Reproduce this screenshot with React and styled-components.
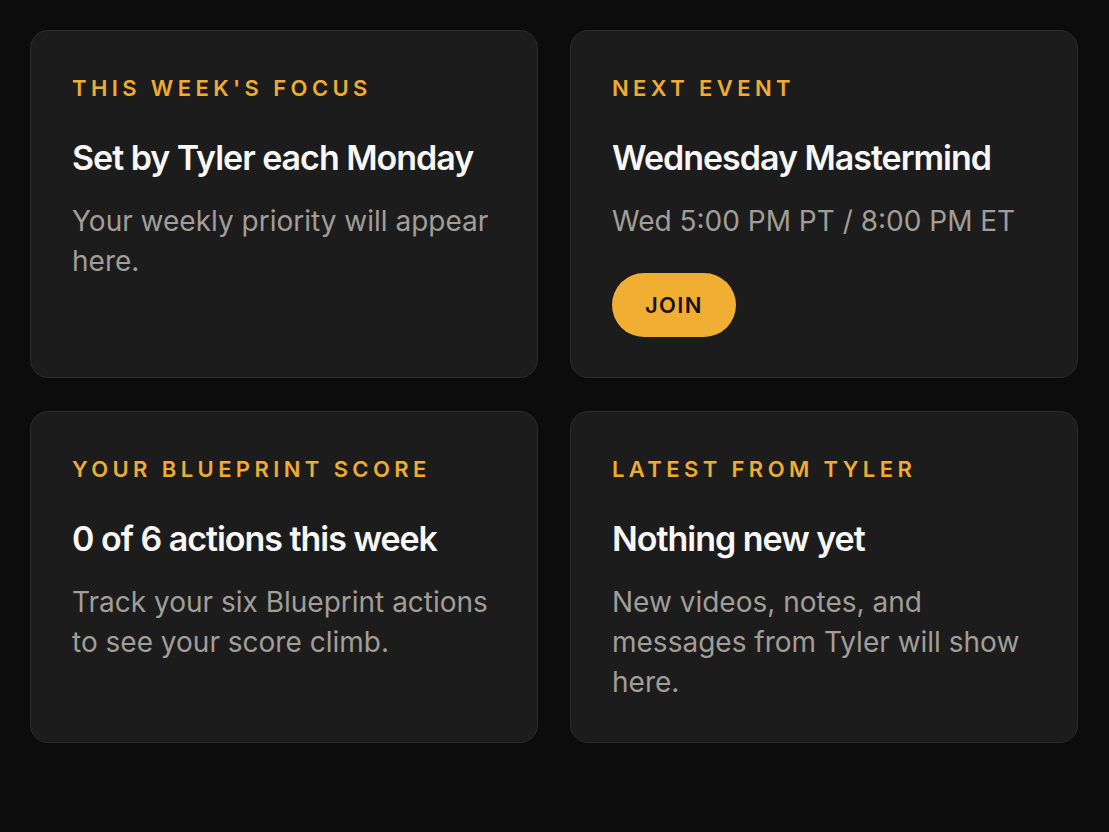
import React from "react";
import styled, { createGlobalStyle } from "styled-components";

const Global = createGlobalStyle`
  html, body { margin: 0; padding: 0; background: #0c0c0c; }
  body { font-family: Inter, "Noto Sans", sans-serif; -webkit-font-smoothing: antialiased; }
  * { box-sizing: border-box; }
`;

const Page = styled.main`
  min-height: 832px;
  padding: 30px 31px 30px 30px;
  background: #0c0c0c;
`;

const Grid = styled.div`
  display: grid;
  grid-template-columns: 1fr 1fr;
  column-gap: 32px;
  row-gap: 33px;
`;

const Card = styled.section`
  background: #1c1c1c;
  border: 1px solid #2b2b2b;
  border-radius: 18px;
  padding: 41px 40px 40px 41px;
  display: flex;
  flex-direction: column;
  align-items: flex-start;
`;

const Label = styled.div`
  font-size: 22px;
  line-height: 32px;
  font-weight: 600;
  letter-spacing: 0.2em;
  text-transform: uppercase;
  color: #efac32;
`;

const Title = styled.h2`
  margin: 34px 0 0;
  font-size: 34px;
  line-height: 40px;
  font-weight: 600;
  letter-spacing: -0.03em;
  color: #f7f7f7;
`;

const Body = styled.p`
  margin: 23px 0 0;
  font-size: 28px;
  line-height: 40px;
  font-weight: 400;
  color: #a19e98;
`;

const JoinButton = styled.button`
  margin-top: 32px;
  height: 64px;
  padding: 0 33px;
  border: none;
  border-radius: 32px;
  background: #f0ae33;
  color: #141414;
  font-family: inherit;
  font-size: 22px;
  font-weight: 600;
  letter-spacing: 0.06em;
  cursor: pointer;
`;

export default function App() {
  return (
    <>
      <Global />
      <Page>
        <Grid>
          <Card>
            <Label>This week's focus</Label>
            <Title>Set by Tyler each Monday</Title>
            <Body>Your weekly priority will appear here.</Body>
          </Card>
          <Card>
            <Label>Next event</Label>
            <Title>Wednesday Mastermind</Title>
            <Body>Wed 5:00 PM PT / 8:00 PM ET</Body>
            <JoinButton>JOIN</JoinButton>
          </Card>
          <Card>
            <Label>Your Blueprint score</Label>
            <Title>0 of 6 actions this week</Title>
            <Body>Track your six Blueprint actions to see your score climb.</Body>
          </Card>
          <Card>
            <Label>Latest from Tyler</Label>
            <Title>Nothing new yet</Title>
            <Body>New videos, notes, and messages from Tyler will show here.</Body>
          </Card>
        </Grid>
      </Page>
    </>
  );
}
